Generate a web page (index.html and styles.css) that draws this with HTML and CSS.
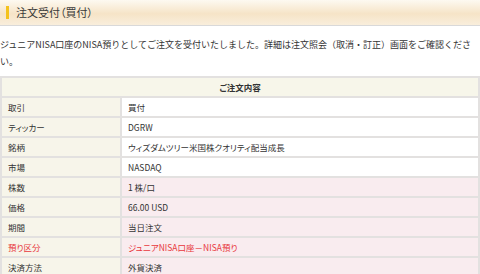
FILE: index.html
```html
<!DOCTYPE html>
<html lang="ja">
<head>
  <meta charset="UTF-8">
  <meta name="viewport" content="width=device-width, initial-scale=1.0">
  <title>注文受付（買付）</title>
  <link rel="stylesheet" href="styles.css">
</head>
<body>

  <div class="page-title">
    <h1>注文受付（買付）</h1>
  </div>

  <p class="message">ジュニアNISA口座のNISA預りとしてご注文を受付いたしました。詳細は注文照会（取消・訂正）画面をご確認ください。</p>

  <table class="order-table">
    <thead>
      <tr>
        <th colspan="2">ご注文内容</th>
      </tr>
    </thead>
    <tbody>
      <tr>
        <th>取引</th>
        <td>買付</td>
      </tr>
      <tr>
        <th>ティッカー</th>
        <td>DGRW</td>
      </tr>
      <tr>
        <th>銘柄</th>
        <td>ウィズダムツリー米国株クオリティ配当成長</td>
      </tr>
      <tr>
        <th>市場</th>
        <td>NASDAQ</td>
      </tr>
      <tr class="input">
        <th>株数</th>
        <td>1 株/口</td>
      </tr>
      <tr class="input">
        <th>価格</th>
        <td>66.00 USD</td>
      </tr>
      <tr class="input">
        <th>期間</th>
        <td>当日注文</td>
      </tr>
      <tr class="input notice">
        <th>預り区分</th>
        <td>ジュニアNISA口座－NISA預り</td>
      </tr>
      <tr class="input">
        <th>決済方法</th>
        <td>外貨決済</td>
      </tr>
    </tbody>
  </table>

</body>
</html>
```

FILE: styles.css
```css
body {
  margin: 0;
  font-family: "Noto Sans CJK JP", "Noto Sans", sans-serif;
  font-size: 9px;
  color: #333;
  background: #fff;
}

.page-title {
  height: 25px;
  display: flex;
  align-items: center;
  padding-left: 6px;
  border-bottom: 1px solid #d9d9d9;
  background: linear-gradient(#fdf9f1, #f6e4c7 55%, #f9eedc);
}
.page-title h1 {
  margin: 0;
  padding-left: 7px;
  border-left: 3px solid #f4c21c;
  font-size: 11px;
  font-weight: normal;
  line-height: 13px;
  color: #3a3a3a;
  font-feature-settings: "palt";
}

.message {
  margin: 10px 0 6px;
  line-height: 17px;
}

.order-table {
  width: 100%;
  border-collapse: collapse;
  font-size: 8.5px;
  font-feature-settings: "palt";
}
.order-table th, .order-table td {
  height: 18px;
  padding: 0 6px;
  border: 2px solid #e3e1e0;
  font-weight: normal;
  text-align: left;
}
.order-table thead th {
  text-align: center;
  font-weight: bold;
  background: #f7f6ea;
}
.order-table tbody th {
  width: 106px;
  background: #f7f5ea;
}
.order-table tbody td {
  background: #fff;
}
.order-table tr.input td {
  background: #f9ecef;
}
.order-table tr.notice th, .order-table tr.notice td {
  color: #e8383d;
}
```
